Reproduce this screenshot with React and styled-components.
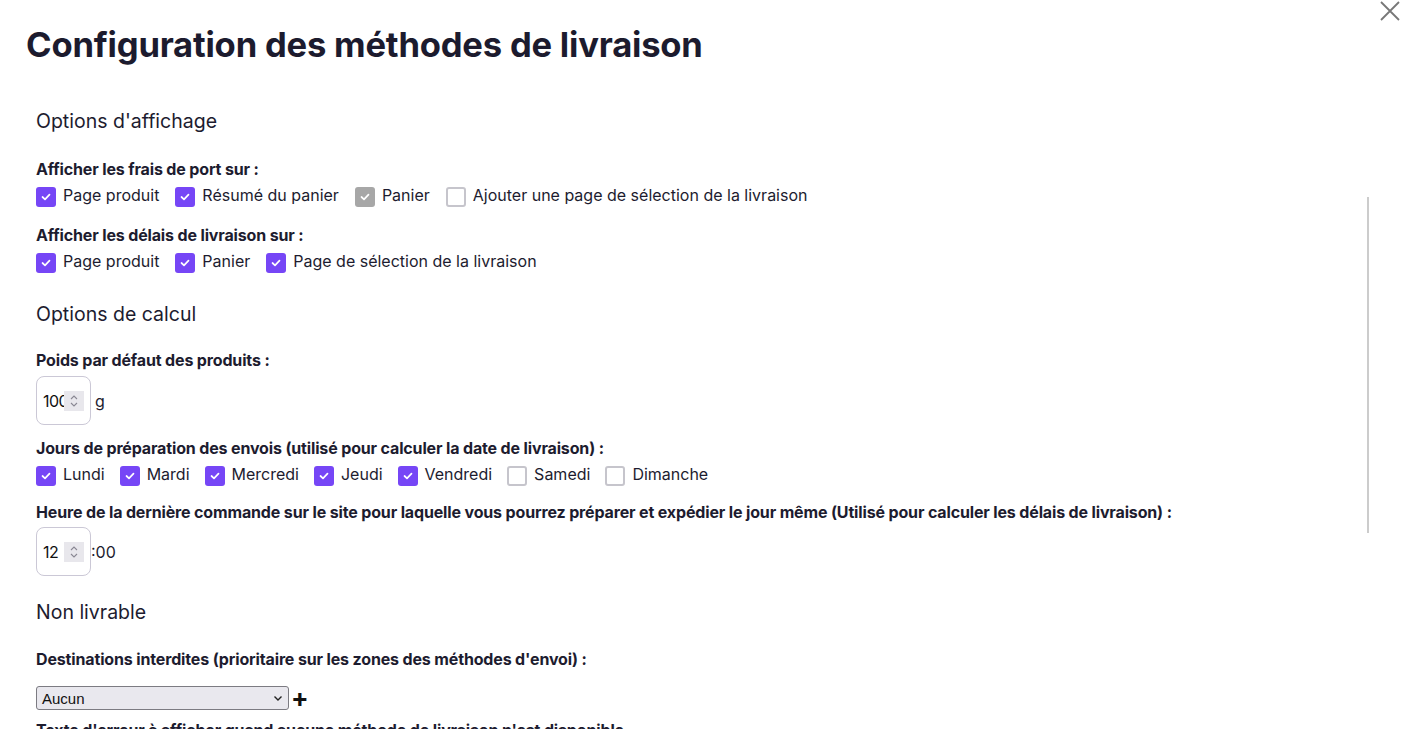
import React from "react";
import styled, { createGlobalStyle } from "styled-components";

const Global = createGlobalStyle`
  html, body {
    margin: 0;
    padding: 0;
    background: #ffffff;
    overflow: hidden;
  }
  body {
    font-family: Inter, "Noto Sans", sans-serif;
    color: #1d1c2f;
  }
`;

const Page = () => {
  return (
    <Modal>
      <Global />
      <Close aria-label="Fermer">
        <svg width="22" height="22" viewBox="0 0 22 22">
          <path d="M2 2 L20 20 M20 2 L2 20" stroke="#777" strokeWidth="1.8" />
        </svg>
      </Close>
      <Title>Configuration des méthodes de livraison</Title>
      <Body>
        <Section>Options d'affichage</Section>
        <Field $bottom="18px">
          <Label>Afficher les frais de port sur :</Label>
          <Row>
            <Check on>Page produit</Check>
            <Check on>Résumé du panier</Check>
            <Check on disabled>Panier</Check>
            <Check>Ajouter une page de sélection de la livraison</Check>
          </Row>
        </Field>
        <Field $bottom="29px">
          <Label>Afficher les délais de livraison sur :</Label>
          <Row>
            <Check on>Page produit</Check>
            <Check on>Panier</Check>
            <Check on>Page de sélection de la livraison</Check>
          </Row>
        </Field>

        <Section $bottom="24px">Options de calcul</Section>
        <Field $gap="6px" $bottom="13px">
          <Label>Poids par défaut des produits :</Label>
          <InputRow>
            <NumberBox value="100" />
            <Unit>g</Unit>
          </InputRow>
        </Field>
        <Field $bottom="16px">
          <Label>
            Jours de préparation des envois (utilisé pour calculer la date de
            livraison) :
          </Label>
          <Row $tight>
            <Check on>Lundi</Check>
            <Check on>Mardi</Check>
            <Check on>Mercredi</Check>
            <Check on>Jeudi</Check>
            <Check on>Vendredi</Check>
            <Check>Samedi</Check>
            <Check>Dimanche</Check>
          </Row>
        </Field>
        <Field $gap="5px" $bottom="24px">
          <Label>
            Heure de la dernière commande sur le site pour laquelle vous
            pourrez préparer et expédier le jour même (Utilisé pour calculer
            les délais de livraison) :
          </Label>
          <InputRow>
            <NumberBox value="12" />
            <Unit $flush>:00</Unit>
          </InputRow>
        </Field>

        <Section $bottom="25px">Non livrable</Section>
        <Field $gap="17px" $bottom="10px">
          <Label>
            Destinations interdites (prioritaire sur les zones des méthodes
            d'envoi) :
          </Label>
          <InputRow>
            <Select>
              <span>Aucun</span>
              <svg width="10" height="7" viewBox="0 0 10 7">
                <path d="M1.5 1.5 L5 5 L8.5 1.5" fill="none" stroke="#222" strokeWidth="1.4" />
              </svg>
            </Select>
            <Plus>+</Plus>
          </InputRow>
        </Field>
        <Label>
          Texte d'erreur à afficher quand aucune méthode de livraison n'est
          disponible
        </Label>
      </Body>
      <Scroll />
    </Modal>
  );
};

const Check = ({ on, disabled, children }) => (
  <CheckItem>
    <Box $on={on} $disabled={disabled}>
      {on && (
        <svg width="10" height="8" viewBox="0 0 10 8">
          <path d="M1.5 4 L4 6.3 L8.5 1.6" fill="none" stroke="#fff" strokeWidth="1.7" strokeLinecap="round" strokeLinejoin="round" />
        </svg>
      )}
    </Box>
    {children}
  </CheckItem>
);

const NumberBox = ({ value }) => (
  <NumBox>
    <NumText>{value}</NumText>
    <Spinner>
      <svg width="10" height="16" viewBox="0 0 10 16">
        <path d="M2 6 L5 3 L8 6 M2 10 L5 13 L8 10" fill="none" stroke="#8a8894" strokeWidth="1.1" />
      </svg>
    </Spinner>
  </NumBox>
);

const Modal = styled.div`
  position: relative;
  width: 1405px;
  height: 729px;
  overflow: hidden;
  box-sizing: border-box;
  padding: 24px 0 0 26px;
`;

const Close = styled.div`
  position: absolute;
  top: 0;
  right: 4px;
  width: 22px;
  height: 22px;
`;

const Title = styled.h1`
  margin: 0;
  font-size: 34.6px;
  font-weight: 700;
  letter-spacing: -0.2px;
  line-height: 40px;
  color: #1c1b2e;
`;

const Body = styled.div`
  display: flex;
  flex-direction: column;
  padding: 45px 0 0 10px;
`;

const Section = styled.h2`
  margin: 0 0 ${(p) => p.$bottom || "26px"};
  font-size: 19.5px;
  font-weight: 400;
  line-height: 24px;
  color: #1d1c2f;
`;

const Field = styled.div`
  display: flex;
  flex-direction: column;
  gap: ${(p) => p.$gap || "4px"};
  margin-bottom: ${(p) => p.$bottom || "17px"};
`;

const Label = styled.div`
  font-size: 16px;
  font-weight: 700;
  line-height: 20px;
  letter-spacing: -0.15px;
  color: #1d1c2f;
`;

const Row = styled.div`
  display: flex;
  align-items: center;
  gap: ${(p) => (p.$tight ? "15px" : "16px")};
`;

const CheckItem = styled.label`
  display: flex;
  align-items: center;
  gap: 7px;
  font-size: 16px;
  line-height: 20px;
  color: #1d1c2f;
`;

const Box = styled.span`
  width: 20px;
  height: 20px;
  box-sizing: border-box;
  border-radius: 3px;
  display: flex;
  align-items: center;
  justify-content: center;
  margin-top: 4px;
  background: ${(p) => (p.$disabled ? "#a7a7a7" : p.$on ? "#7646f6" : "#fff")};
  border: ${(p) => (p.$on ? "none" : "2px solid #c6c5cc")};
`;

const InputRow = styled.div`
  display: flex;
  align-items: center;
`;

const NumBox = styled.div`
  width: 55px;
  height: 49px;
  box-sizing: border-box;
  border: 1px solid #cbc8d6;
  border-radius: 8px;
  display: flex;
  align-items: center;
  padding-left: 6px;
  overflow: hidden;
`;

const NumText = styled.span`
  width: 21px;
  overflow: hidden;
  font-size: 16px;
  color: #111;
  white-space: nowrap;
  letter-spacing: -0.6px;
`;

const Spinner = styled.span`
  width: 20px;
  height: 20px;
  background: #e8e7ec;
  display: flex;
  align-items: center;
  justify-content: center;
`;

const Unit = styled.span`
  margin-left: ${(p) => (p.$flush ? "0" : "4px")};
  font-size: 16px;
  color: #1d1c2f;
`;

const Select = styled.div`
  width: 253px;
  height: 24px;
  box-sizing: border-box;
  background: #e9e8ee;
  border: 1px solid #7c7b82;
  border-radius: 3px;
  display: flex;
  align-items: center;
  justify-content: space-between;
  padding: 0 5px 0 5px;
  font-family: "Liberation Sans", Arial, sans-serif;
  font-size: 15px;
  color: #111;
`;

const Plus = styled.span`
  margin-left: 2px;
  font-size: 26px;
  font-weight: 700;
  line-height: 20px;
  color: #111;
`;

const Scroll = styled.div`
  position: absolute;
  left: 1367px;
  top: 197px;
  width: 2px;
  height: 336px;
  background: #cccccc;
`;

export default Page;
